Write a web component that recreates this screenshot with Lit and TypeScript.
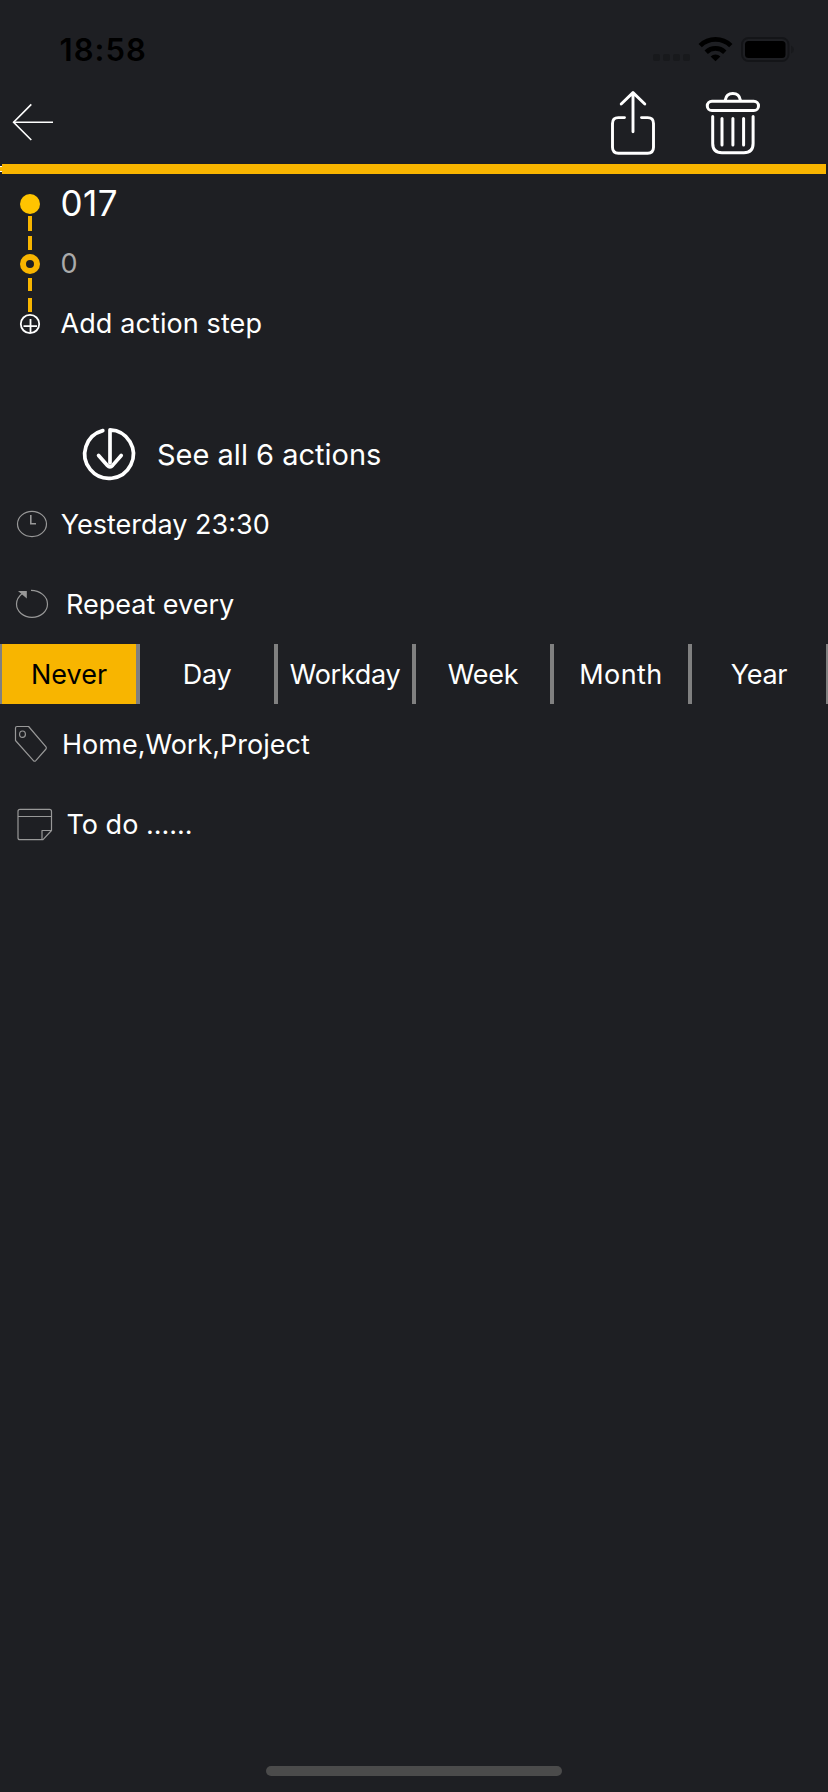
import { LitElement, html, css, svg } from "lit";
import { customElement, state } from "lit/decorators.js";
import { classMap } from "lit/directives/class-map.js";

const PERIODS = ["Never", "Day", "Workday", "Week", "Month", "Year"];

@customElement("status-bar")
export class StatusBar extends LitElement {
  static styles = css`
    :host {
      display: flex;
      align-items: flex-start;
      justify-content: space-between;
      height: 90px;
      padding: 0 34px 0 59.5px;
      box-sizing: border-box;
      color: #000;
    }
    .time {
      margin-top: 30px;
      font-size: 31px;
      font-weight: 600;
      line-height: 40px;
      letter-spacing: 1.04px;
    }
    .icons {
      display: block;
      margin-top: 34px;
    }
    .faint {
      fill: #18191c;
    }
    .arc {
      fill: none;
      stroke: #000;
      stroke-width: 4.8;
    }
    .shell {
      fill: none;
      stroke: #141518;
      stroke-width: 2;
    }
  `;

  render() {
    return html`
      <span class="time">18:58</span>
      <svg class="icons" width="142" height="30" viewBox="652 34 142 30">
        ${[653, 663, 673, 683].map(
          (x) => svg`<rect class="faint" x=${x} y="54" width="7" height="7" rx="2" />`
        )}
        <path class="arc" d="M700.2 45.6A22 22 0 0 1 730.8 45.6" />
        <path class="arc" d="M706.2 52.2A13.4 13.4 0 0 1 724.8 52.2" />
        <path d="M715.5 61.2L710.6 56.4A7 7 0 0 1 720.4 56.4Z" />
        <rect class="shell" x="742" y="38" width="46.5" height="23" rx="6.5" />
        <rect x="745" y="41" width="40.5" height="17" rx="3.5" />
        <path class="faint" d="M791 45.5Q794 47 794 49.5T791 53.5Z" />
      </svg>
    `;
  }
}

@customElement("nav-bar")
export class NavBar extends LitElement {
  static styles = css`
    :host {
      display: flex;
      align-items: center;
      height: 74px;
    }
    svg {
      display: block;
      fill: none;
      stroke: #fff;
      stroke-linecap: round;
      stroke-linejoin: round;
    }
    .back {
      margin-right: auto;
      stroke-width: 1.6;
      stroke-linecap: butt;
      stroke-linejoin: miter;
    }
    .share {
      stroke-width: 2.9;
    }
    .trash {
      margin: 0 62px 0 40px;
      stroke-width: 3;
    }
  `;

  render() {
    return html`
      <svg class="back" width="60" height="74" viewBox="0 90 60 74">
        <path d="M31.3 104.4L13.6 122.2L31.3 140" />
        <path d="M13.6 122.2H53" />
      </svg>
      <svg class="share" width="60" height="74" viewBox="604 90 60 74">
        <path d="M624.5 117.6H618.4Q612.5 117.6 612.5 123.5V147.3Q612.5 153.2 618.4 153.2H647.6Q653.5 153.2 653.5 147.3V123.5Q653.5 117.6 647.6 117.6H641.5" />
        <path d="M633 92.8V131.7M621.2 104L633 92.6L644.8 104" />
      </svg>
      <svg class="trash" width="62" height="74" viewBox="704 90 62 74">
        <path d="M725.3 100C726 95.5 729 93.5 732.8 93.5S739.6 95.5 740.3 100" />
        <rect x="707.3" y="101.2" width="51.2" height="9.4" rx="4.7" />
        <path d="M712.7 116.4V143.5Q712.7 152.7 721.9 152.7H743.9Q753.1 152.7 753.1 143.5V116.4" />
        <path d="M722 118.6V145M732.9 118.6V145M743.6 118.6V145" />
      </svg>
    `;
  }
}

@customElement("action-steps")
export class ActionSteps extends LitElement {
  static styles = css`
    :host {
      display: flex;
      height: 180px;
    }
    .line {
      display: block;
      flex: none;
    }
    .dash {
      stroke: #f8b500;
      stroke-width: 4;
    }
    .dot {
      fill: #ffc400;
    }
    .ring {
      fill: none;
      stroke: #f8b500;
      stroke-width: 6;
    }
    .add {
      fill: none;
      stroke: #fff;
      stroke-width: 1.8;
    }
    .labels {
      display: grid;
      grid-template-rows: repeat(3, 60px);
      align-items: center;
      margin-top: -1px;
      font-size: 27px;
      letter-spacing: 0.1px;
    }
    .title {
      font-size: 35px;
      letter-spacing: 0.5px;
    }
    .step {
      color: #aaa;
    }
  `;

  render() {
    return html`
      <svg class="line" width="60.5" height="180" viewBox="0 174 60.5 180">
        <path class="dash" d="M30 216V231M30 236V250M30 278V291M30 298V312" />
        <circle class="dot" cx="30" cy="204" r="10" />
        <circle class="ring" cx="30" cy="264" r="7" />
        <circle class="add" cx="30" cy="324" r="9.2" />
        <path class="add" d="M30.5 319V333M23.5 326.2H37" />
      </svg>
      <div class="labels">
        <span class="title">017</span>
        <span class="step">0</span>
        <span>Add action step</span>
      </div>
    `;
  }
}

@customElement("repeat-picker")
export class RepeatPicker extends LitElement {
  @state() private selected = "Never";

  static styles = css`
    :host {
      display: grid;
      grid-template-columns: repeat(6, 1fr);
      height: 60px;
      font-size: 27px;
    }
    .cell {
      display: flex;
      align-items: center;
      justify-content: center;
      border: solid #808080;
      border-width: 0 2px;
      min-width: 0;
      cursor: pointer;
    }
    .active {
      background: #f8b500;
      color: #000;
    }
    .tight {
      letter-spacing: -0.3px;
    }
    .wide {
      letter-spacing: 0.4px;
    }
  `;

  render() {
    return PERIODS.map(
      (p) => html`<div
        class=${classMap({
          cell: true,
          active: p === this.selected,
          tight: ["Day", "Workday", "Week", "Year"].includes(p),
          wide: p === "Month",
        })}
        @click=${() => (this.selected = p)}
      >${p}</div>`
    );
  }
}

@customElement("app-root")
export class AppRoot extends LitElement {
  static styles = css`
    :host {
      display: flex;
      flex-direction: column;
      height: 1792px;
      background: #1e1f23;
      color: #fff;
      font-family: Inter, "Liberation Sans", sans-serif;
      font-size: 27px;
      white-space: nowrap;
      overflow: hidden;
    }
    .progress {
      display: flex;
      align-items: center;
      height: 10px;
      padding-right: 2px;
    }
    .cap {
      width: 2px;
      height: 6px;
      box-sizing: border-box;
      border: solid #fff;
      border-width: 1px 0;
      background: #f8b500;
    }
    .fill {
      flex: 1;
      height: 10px;
      background: #f8b500;
    }
    .row {
      display: flex;
      align-items: center;
      height: 80px;
    }
    .row svg {
      display: block;
      flex: none;
      fill: none;
      stroke: #989898;
      stroke-width: 1.2;
      stroke-linejoin: round;
    }
    .row.all {
      height: 60px;
      margin-top: 70px;
      font-size: 29px;
    }
    .row.all svg {
      stroke: #fff;
      stroke-width: 3.7;
      stroke-linecap: round;
    }
    .row .solid {
      fill: #989898;
      stroke: none;
    }
    .row .hands {
      stroke-width: 1.6;
      stroke-linejoin: miter;
    }
    .home {
      width: 296px;
      height: 10px;
      margin: auto auto 16px 266px;
      border-radius: 5px;
      background: #4b4b4b;
    }
  `;

  render() {
    return html`
      <status-bar></status-bar>
      <nav-bar></nav-bar>
      <div class="progress"><div class="cap"></div><div class="fill"></div></div>
      <action-steps></action-steps>

      <div class="row all">
        <svg width="157" height="60" viewBox="0 424 157 60">
          <path d="M102.8 430.6A24.3 24.3 0 1 0 110 429.8V463" />
          <path d="M98.6 455.5L107.4 465.4Q110 468.2 112.6 465.4L121.2 455.5" />
        </svg>
        <span>See all 6 actions</span>
      </div>

      <div class="row">
        <svg width="60.7" height="80" viewBox="0 484 60.7 80">
          <ellipse cx="32" cy="524" rx="14.5" ry="12.6" />
          <path class="hands" d="M30.8 515V523.7H36" />
        </svg>
        <span>Yesterday 23:30</span>
      </div>

      <div class="row">
        <svg width="66" height="80" viewBox="0 564 66 80">
          <path d="M31 590.4C40 590.4 47.5 596.5 47.5 604C47.5 611.5 40.5 617.3 32 617.3S16.5 611.5 16.5 604C16.5 599.5 19 596 22.5 593.2" />
          <path class="solid" d="M18 591H26.8V598.6Z" />
        </svg>
        <span>Repeat every</span>
      </div>

      <repeat-picker></repeat-picker>

      <div class="row">
        <svg width="62" height="80" viewBox="0 704 62 80">
          <path d="M17 726.5H28.6L46 746.8Q46.8 748 46 749L35.8 760.6Q34.6 761.9 33.4 760.6L15.5 740.5V728Q15.5 726.5 17 726.5Z" />
          <ellipse cx="22.5" cy="734.2" rx="2.9" ry="3.2" />
        </svg>
        <span>Home,Work,Project</span>
      </div>

      <div class="row">
        <svg width="66.5" height="80" viewBox="0 784 66.5 80">
          <path d="M20 809.4H49.5Q51.5 809.4 51.5 811.4V830.5L43 839.7H20Q18 839.7 18 837.7V811.4Q18 809.4 20 809.4Z" />
          <path d="M18 816.5H51.5M51.5 830.5H42V839.7" />
        </svg>
        <span>To do ......</span>
      </div>

      <div class="home"></div>
    `;
  }
}
